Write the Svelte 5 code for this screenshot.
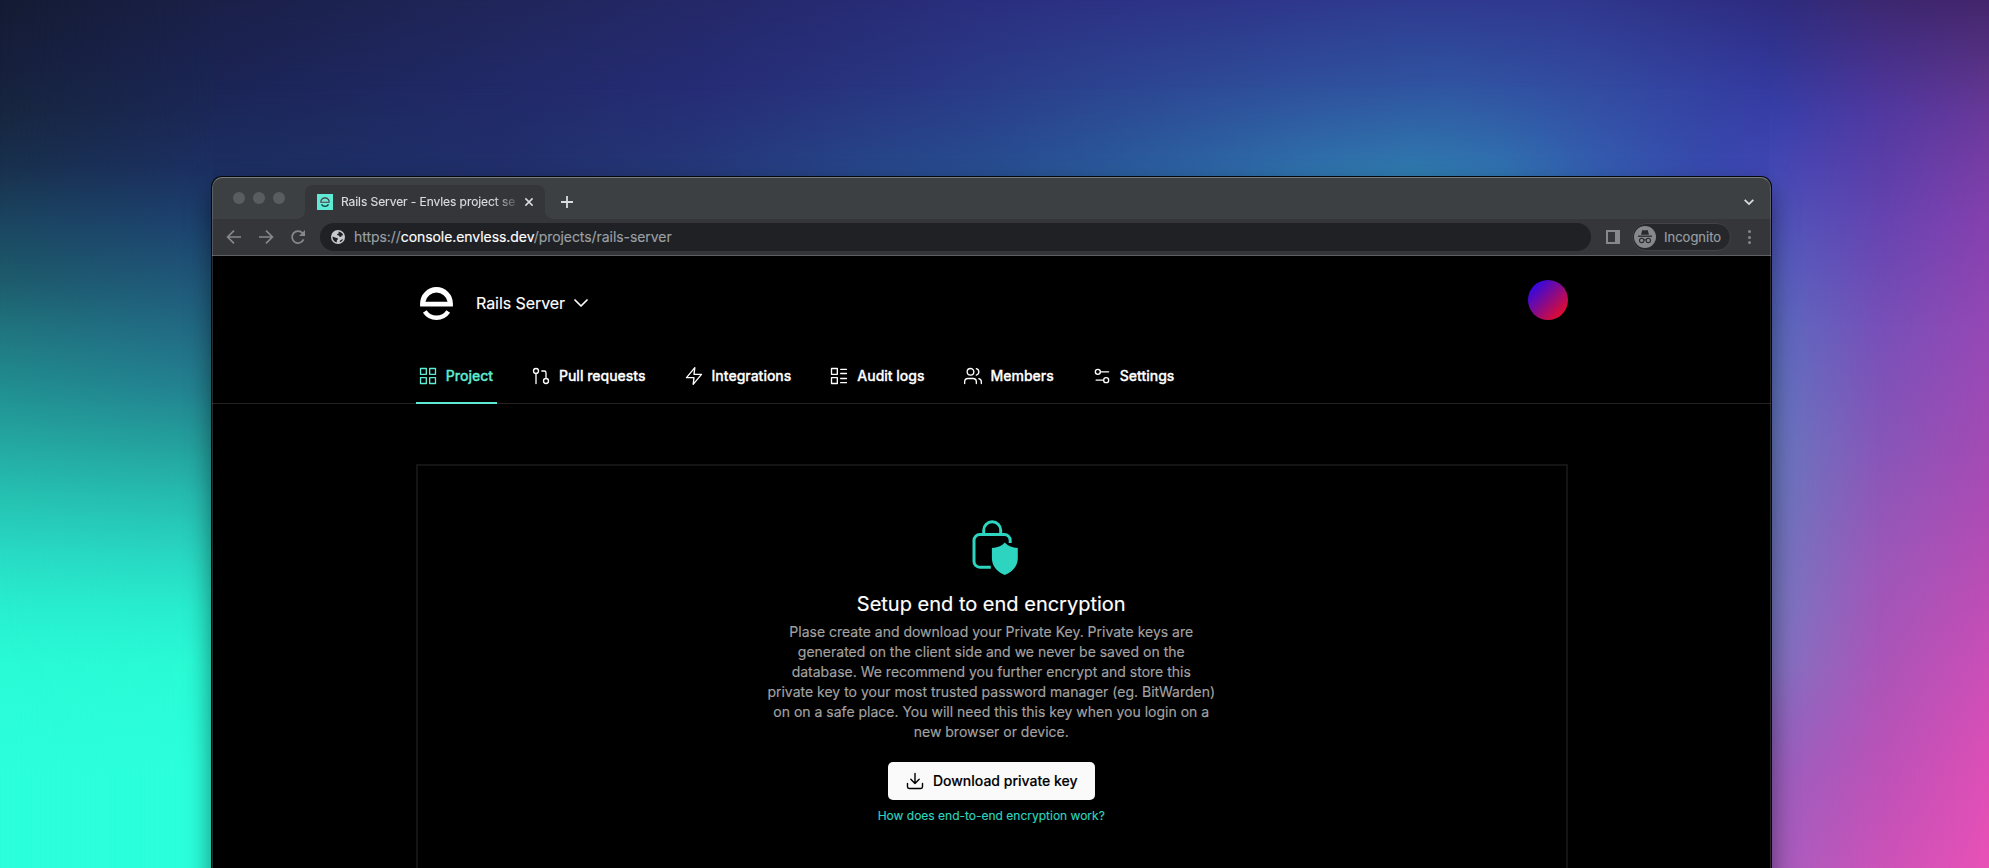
<script>
  const tabs = [
    { label: 'Project', icon: 'grid', active: true },
    { label: 'Pull requests', icon: 'pull' },
    { label: 'Integrations', icon: 'zap' },
    { label: 'Audit logs', icon: 'list' },
    { label: 'Members', icon: 'users' },
    { label: 'Settings', icon: 'sliders' }
  ];

  const icons = {
    grid: 'M3 3h7v7H3zM14 3h7v7h-7zM14 14h7v7h-7zM3 14h7v7H3z',
    pull: 'M15 18a3 3 0 1 0 6 0a3 3 0 1 0-6 0M3 6a3 3 0 1 0 6 0a3 3 0 1 0-6 0M13 6h3a2 2 0 0 1 2 2v7M6 9v12',
    zap: 'M13 2L3 14h9l-1 8 10-12h-9l1-8z',
    list: 'M3 3h7v7H3zM3 14h7v7H3zM14 4h7M14 9h7M14 15h7M14 20h7',
    users:
      'M16 21v-2a4 4 0 0 0-4-4H6a4 4 0 0 0-4 4v2M5 7a4 4 0 1 0 8 0a4 4 0 1 0-8 0M22 21v-2a4 4 0 0 0-3-3.87M16 3.13a4 4 0 0 1 0 7.75',
    sliders: 'M20 7h-9M14 17H5M14 17a3 3 0 1 0 6 0a3 3 0 1 0-6 0M4 7a3 3 0 1 0 6 0a3 3 0 1 0-6 0',
    download: 'M21 15v4a2 2 0 0 1-2 2H5a2 2 0 0 1-2-2v-4M7 10l5 5 5-5M12 15V3',
    chevron: 'M6 9l6 6 6-6'
  };
</script>

{#snippet icon(name, size, weight)}
  <svg class="icon" width={size} height={size} viewBox="0 0 24 24" stroke-width={weight}>
    <path d={icons[name]} />
  </svg>
{/snippet}

{#snippet mark(size)}
  <svg width={size} height={size} viewBox="0 0 34 34">
    <path
      fill="currentColor"
      fill-rule="evenodd"
      d="M.1 20V17a16.9 16.9 0 0 1 33.8 0v3ZM5.6 15.2h22.8a11.6 11.6 0 0 0-22.8 0Z"
    />
    <path fill="none" stroke="currentColor" stroke-width="4.6" d="M4.9 25.2a14.6 14.6 0 0 0 24.2 0" />
  </svg>
{/snippet}

<div class="desktop">
  <div class="wall top"></div>
  <div class="wall top mid"></div>
  <div class="wall top low"></div>
  <div class="wall left"></div>
  <div class="wall left inner"></div>
  <div class="wall right"></div>
  <div class="wall right center"></div>
  <div class="wall right outer"></div>

  <div class="window">
    <div class="strip">
      <div class="lights"><i></i><i></i><i></i></div>
      <div class="tab">
        <span class="favicon">{@render mark(10)}</span>
        <span class="title">Rails Server - Envles project se</span>
        <svg width="16" height="16" viewBox="0 0 16 16"><path d="M4.4 4.4l7.2 7.2M11.6 4.4l-7.2 7.2" /></svg>
      </div>
      <svg class="plus" width="16" height="16" viewBox="0 0 16 16"><path d="M8 2v12M2 8h12" /></svg>
      <svg class="more" width="16" height="16" viewBox="0 0 16 16"><path d="M3.7 5.8L8 10.1l4.3-4.3" /></svg>
    </div>

    <div class="toolbar">
      <svg class="tool" width="20" height="20" viewBox="0 0 20 20"><path d="M17 10H4M10 3.6L3.6 10l6.4 6.4" /></svg>
      <svg class="tool" width="20" height="20" viewBox="0 0 20 20"><path d="M3 10h13M10 3.6l6.4 6.4-6.4 6.4" /></svg>
      <svg class="tool" width="20" height="20" viewBox="0 0 20 20">
        <path d="M15.6 12.4A6 6 0 1 1 14.6 6.1L16 7.6" />
        <path class="solid" d="M17 3v6h-6z" />
      </svg>
      <div class="address">
        <svg width="14" height="14" viewBox="0 0 14 14">
          <circle cx="7" cy="7" r="7" fill="#c8cacc" />
          <path
            fill="#202124"
            d="M7.6 1.5c2.1.2 4 1.8 4.6 3.7l-1.5.4-.6 1.3-1.5-.2-.6-1.2-1.6-.2-.3-1.2 1.5-.7ZM1.5 6.4l3.3 1.3 1.7.3.4 1.3-1 .9-.1 2.2C3.2 11.8 1.4 9.6 1.5 6.4Z"
          />
          <path fill="#202124" d="M8.6 12.2l.5-1.7 1.3-.7 1.7-.9c-.6 1.7-1.9 2.9-3.5 3.3Z" />
        </svg>
        <span class="url">https://<b>console.envless.dev</b>/projects/rails-server</span>
      </div>
      <svg class="panel" width="14" height="14" viewBox="0 0 14 14">
        <path fill-rule="evenodd" d="M0 0h14v14H0zM2 2v10h7V2z" />
      </svg>
      <div class="incognito">
        <svg width="22" height="22" viewBox="0 0 22 22">
          <circle cx="11" cy="11" r="11" fill="#87888b" />
          <g fill="none" stroke="#292a2d" stroke-width="1.1">
            <path d="M4 10.2h14" stroke-width="1.3" />
            <circle cx="7.7" cy="14.4" r="2.2" />
            <circle cx="14.3" cy="14.4" r="2.2" />
            <path d="M9.9 14.1q1.1-.6 2.2 0" />
          </g>
          <path fill="#292a2d" d="M7 8.7l1.2-4.2q.2-.5.8-.4l2 .4 2-.4q.6-.1.8.4L15 8.7Z" />
        </svg>
        <span>Incognito</span>
      </div>
      <div class="dots"><i></i><i></i><i></i></div>
    </div>

    <header>
      <div class="brand">
        <div class="switcher">
          <span class="logo">{@render mark(33)}</span>
          <span>Rails Server</span>
          {@render icon('chevron', 24, 1.7)}
        </div>
        <div class="avatar"></div>
      </div>
      <nav>
        {#each tabs as tab}
          <div class="item" class:active={tab.active}>
            {@render icon(tab.icon, 20, 1.6)}
            <span>{tab.label}</span>
          </div>
        {/each}
      </nav>
    </header>

    <main>
      <section>
        <svg class="lock" width="46" height="56" viewBox="0 0 46 56">
          <g fill="none" stroke="currentColor" stroke-width="3">
            <path d="M18.8 47.2H7.8a5.8 5.8 0 0 1-5.8-5.8V20.3a5.8 5.8 0 0 1 5.8-5.8h24.6a5.8 5.8 0 0 1 5.8 5.8v2.7" />
            <path d="M11.7 14.5v-4.2a8.5 8.5 0 0 1 17 0v4.2" />
          </g>
          <path
            fill="currentColor"
            d="M32.800 22.600c-3.300 3.700-7.500 5.300-12.900 5.300V38c0 8.500 5.400 14 12.900 17 7.500-3 13-8.500 13-17V27.900c-5.400 0-9.700-1.600-13-5.300Z"
          />
        </svg>
        <h1>Setup end to end encryption</h1>
        <p>
          Plase create and download your Private Key. Private keys are generated on the client side and we never be saved
          on the database. We recommend you further encrypt and store this private key to your most trusted password
          manager (eg. BitWarden) on on a safe place. You will need this this key when you login on a new browser or
          device.
        </p>
        <button>
          {@render icon('download', 20, 1.7)}
          <span>Download private key</span>
        </button>
        <a href="#encryption">How does end-to-end encryption work?</a>
      </section>
    </main>
  </div>
</div>

<style>
  :global(body) {
    margin: 0;
    overflow: hidden;
  }
  .desktop {
    position: relative;
    box-sizing: border-box;
    width: 1989px;
    height: 868px;
    padding: 177px 0 0 212px;
    overflow: hidden;
    background: #000;
    font-family: Inter, 'Liberation Sans', sans-serif;
    -webkit-text-stroke: 0.15px currentColor;
  }
  svg {
    display: block;
    flex: none;
  }
  .icon {
    fill: none;
    stroke: currentColor;
    stroke-linecap: round;
    stroke-linejoin: round;
  }

  .wall {
    position: absolute;
    top: 0;
  }
  .wall.top {
    left: 0;
    width: 1989px;
    height: 190px;
    background: linear-gradient(90deg, #141b33 0, #1a2048 212px, #20265a 500px, #262a70 800px, #2b2f80 1000px, #2e3488 1200px, #2f3b90 1400px, #30388f 1570px, #2e2c80 1770px);
  }
  .wall.top.mid {
    background: linear-gradient(90deg, #1b2455 212px, #1f2862 400px, #262c75 700px, #293682 900px, #2c4490 1100px, #2f509c 1300px, #3055a2 1450px, #334ba0 1600px, #343aa0 1770px);
    mask-image: linear-gradient(transparent, #000 90px);
  }
  .wall.top.low {
    background: linear-gradient(90deg, #1c3062 212px, #21306c 500px, #253a7a 700px, #26488a 850px, #275192 1000px, #2c68a5 1200px, #2f78ae 1320px, #2f80b0 1410px, #3078b2 1500px, #345fb2 1600px, #384cb0 1700px, #4248b5 1770px);
    mask-image: linear-gradient(transparent 85px, #000 185px);
  }
  .wall.left {
    left: 0;
    width: 213px;
    height: 868px;
    background: linear-gradient(#141b33 0, #161f3c 60px, #17263f 110px, #18304d 166px, #1b4560 221px, #1d5a6b 277px, #207680 332px, #218f91 388px, #24a8a2 443px, #26c2b2 498px, #28dbc4 554px, #28efcf 609px, #29fbd6 665px, #2bffdc 775px);
  }
  .wall.left.inner {
    background: linear-gradient(#1a2048 0, #1a2350 55px, #1b2757 111px, #1c2f62 166px, #1d4170 221px, #20567a 277px, #226a85 332px, #238090 388px, #249e9c 443px, #26bbb0 498px, #28d5c0 554px, #28ecce 609px, #29fad5 665px, #2bffdc 775px);
    mask-image: linear-gradient(90deg, transparent, #000);
  }
  .wall.right {
    left: 1769px;
    width: 220px;
    height: 868px;
    background: linear-gradient(#2e2c80 0, #303592 55px, #363fa8 111px, #4248b5 166px, #4c55bb 221px, #5462bf 277px, #5a6dc0 332px, #6073c0 388px, #6678c0 443px, #6a78c0 500px, #7077c0 554px, #7678c2 609px, #7f74c2 665px, #8b68c0 720px, #9860bf 775px, #a55ec0 868px);
  }
  .wall.right.center {
    background: linear-gradient(#3c2870 0, #463089 55px, #5038a0 111px, #6544b0 221px, #7850b8 332px, #8656b8 443px, #9a58b8 554px, #aa55b8 665px, #bc52b8 775px, #cb52b8 868px);
    mask-image: linear-gradient(90deg, transparent, #000 110px);
  }
  .wall.right.outer {
    background: linear-gradient(#43256c 0, #553080 55px, #683898 111px, #783da5 166px, #8540ae 221px, #9648b5 332px, #a34ab4 443px, #b54cb5 554px, #cb4eb7 665px, #de4fb6 775px, #e851b6 868px);
    mask-image: linear-gradient(90deg, transparent 110px, #000);
  }

  .window {
    position: relative;
    width: 1559px;
    height: 760px;
    border-radius: 10px 10px 0 0;
    background: #000;
    box-shadow: 0 0 0 1px #05070a, 0 12px 26px rgba(0, 0, 0, 0.5);
  }
  .window::after {
    content: '';
    position: absolute;
    inset: 0;
    border: 1px solid rgba(255, 255, 255, 0.17);
    border-top-color: rgba(255, 255, 255, 0.32);
    border-radius: inherit;
    pointer-events: none;
  }

  .strip {
    display: flex;
    align-items: flex-end;
    height: 42px;
    border-radius: 10px 10px 0 0;
    background: #3c4043;
  }
  .lights {
    display: flex;
    align-items: center;
    gap: 8px;
    height: 42px;
    padding: 0 20px 0 21px;
  }
  .lights i {
    width: 12px;
    height: 12px;
    border-radius: 50%;
    background: #5a5d60;
  }
  .tab {
    position: relative;
    display: flex;
    align-items: center;
    box-sizing: border-box;
    width: 240px;
    height: 34px;
    padding: 0 8px 0 12px;
    border-radius: 8px 8px 0 0;
    background: #35363a;
  }
  .tab::before,
  .tab::after {
    content: '';
    position: absolute;
    bottom: 0;
    width: 8px;
    height: 8px;
  }
  .tab::before {
    left: -8px;
    background: radial-gradient(circle at 0 0, transparent 7.5px, #35363a 8px);
  }
  .tab::after {
    right: -8px;
    background: radial-gradient(circle at 100% 0, transparent 7.5px, #35363a 8px);
  }
  .favicon {
    display: grid;
    place-items: center;
    width: 16px;
    height: 16px;
    background: #5eead4;
    color: #123c3a;
  }
  .title {
    flex: 1;
    margin: 0 4px 0 8px;
    overflow: hidden;
    color: #dadce0;
    font-size: 12px;
    line-height: 16px;
    letter-spacing: -0.07px;
    white-space: nowrap;
    mask-image: linear-gradient(90deg, #000 152px, rgba(0, 0, 0, 0.15) 176px);
  }
  .tab svg:last-child,
  .plus,
  .more {
    fill: none;
    stroke: #dadce0;
    stroke-width: 1.5;
  }
  .plus,
  .more {
    margin-bottom: 9px;
    stroke-width: 1.8;
  }
  .plus {
    margin-left: 14px;
  }
  .more {
    margin: 0 14px 9px auto;
  }

  .toolbar {
    display: flex;
    align-items: center;
    box-sizing: border-box;
    height: 37px;
    padding: 0 12px;
    border-bottom: 1px solid #5f6063;
    background: #35363a;
  }
  .tool {
    margin-right: 12px;
    fill: none;
    stroke: #87888b;
    stroke-width: 1.7;
  }
  .tool .solid {
    fill: #87888b;
    stroke: none;
  }
  .address {
    display: flex;
    align-items: center;
    flex: 1;
    height: 28px;
    padding-left: 11px;
    border-radius: 14px;
    background: #202124;
  }
  .url {
    margin-left: 9px;
    color: #9aa0a6;
    font-size: 14px;
    line-height: 20px;
    letter-spacing: -0.06px;
  }
  .url b {
    color: #fff;
    font-weight: 400;
  }
  .panel {
    margin: 0 12px 0 15px;
    fill: #87888b;
  }
  .incognito {
    display: flex;
    align-items: center;
    box-sizing: border-box;
    width: 99px;
    height: 28px;
    padding-left: 1px;
    border: 1px solid #424347;
    border-radius: 14px;
    background: #26272b;
    color: #9aa0a6;
    font-size: 13px;
    line-height: 20px;
  }
  .incognito span {
    margin-left: 8.5px;
  }
  .dots {
    display: grid;
    gap: 2.5px;
    margin: 0 8px 0 17.5px;
  }
  .dots i {
    width: 3px;
    height: 3px;
    border-radius: 50%;
    background: #87888b;
  }

  header {
    box-sizing: border-box;
    height: 148px;
    padding-left: 204px;
    background: linear-gradient(#222, #222) 0 100% / 100% 1px no-repeat #000;
    color: #fff;
  }
  .brand {
    display: flex;
    align-items: center;
    justify-content: space-between;
    width: 1152px;
    height: 88px;
  }
  .switcher {
    display: flex;
    align-items: center;
    padding: 6px 0 0 3.5px;
    font-size: 16px;
    line-height: 24px;
    letter-spacing: -0.06px;
  }
  .logo {
    margin-right: 23.5px;
  }
  .switcher .icon {
    margin-left: 4px;
  }
  .avatar {
    width: 40px;
    height: 40px;
    border-radius: 50%;
    background: linear-gradient(135deg, #2408f0 8%, #f00c20 92%);
  }
  nav {
    display: flex;
    gap: 32px;
    height: 60px;
  }
  .item {
    display: flex;
    align-items: center;
    box-sizing: border-box;
    padding: 6px 4.2px 0 1.8px;
    border-bottom: 2px solid transparent;
    font-size: 14px;
    font-weight: 500;
    line-height: 20px;
    white-space: nowrap;
    -webkit-text-stroke: 0.3px currentColor;
  }
  .item span {
    margin-left: 8px;
  }
  .item.active {
    border-color: #5eead4;
    color: #5eead4;
  }

  main {
    padding: 60px 0 0 204px;
  }
  section {
    display: flex;
    flex-direction: column;
    align-items: center;
    box-sizing: border-box;
    width: 1152px;
    height: 460px;
    padding: 54px 1.5px 0 0;
    border: 2px solid #141414;
  }
  .lock {
    margin-left: 7px;
    color: #2dd4bf;
  }
  h1 {
    margin: 14px 0 4px;
    color: #fff;
    font-size: 20px;
    font-weight: 400;
    line-height: 28px;
  }
  p {
    width: 448px;
    margin: 0;
    color: #a3a3a3;
    font-size: 14px;
    line-height: 20px;
    text-align: center;
  }
  button {
    display: flex;
    align-items: center;
    height: 38px;
    margin: 20px 0 8px;
    padding: 0 17px;
    border: 0;
    border-radius: 5px;
    background: #fafafa;
    color: #000;
    font: 500 14px/20px Inter, 'Liberation Sans', sans-serif;
  }
  button span {
    margin-left: 8px;
  }
  a {
    color: #2dd4bf;
    font-size: 12px;
    line-height: 16px;
    text-decoration: none;
  }
</style>
